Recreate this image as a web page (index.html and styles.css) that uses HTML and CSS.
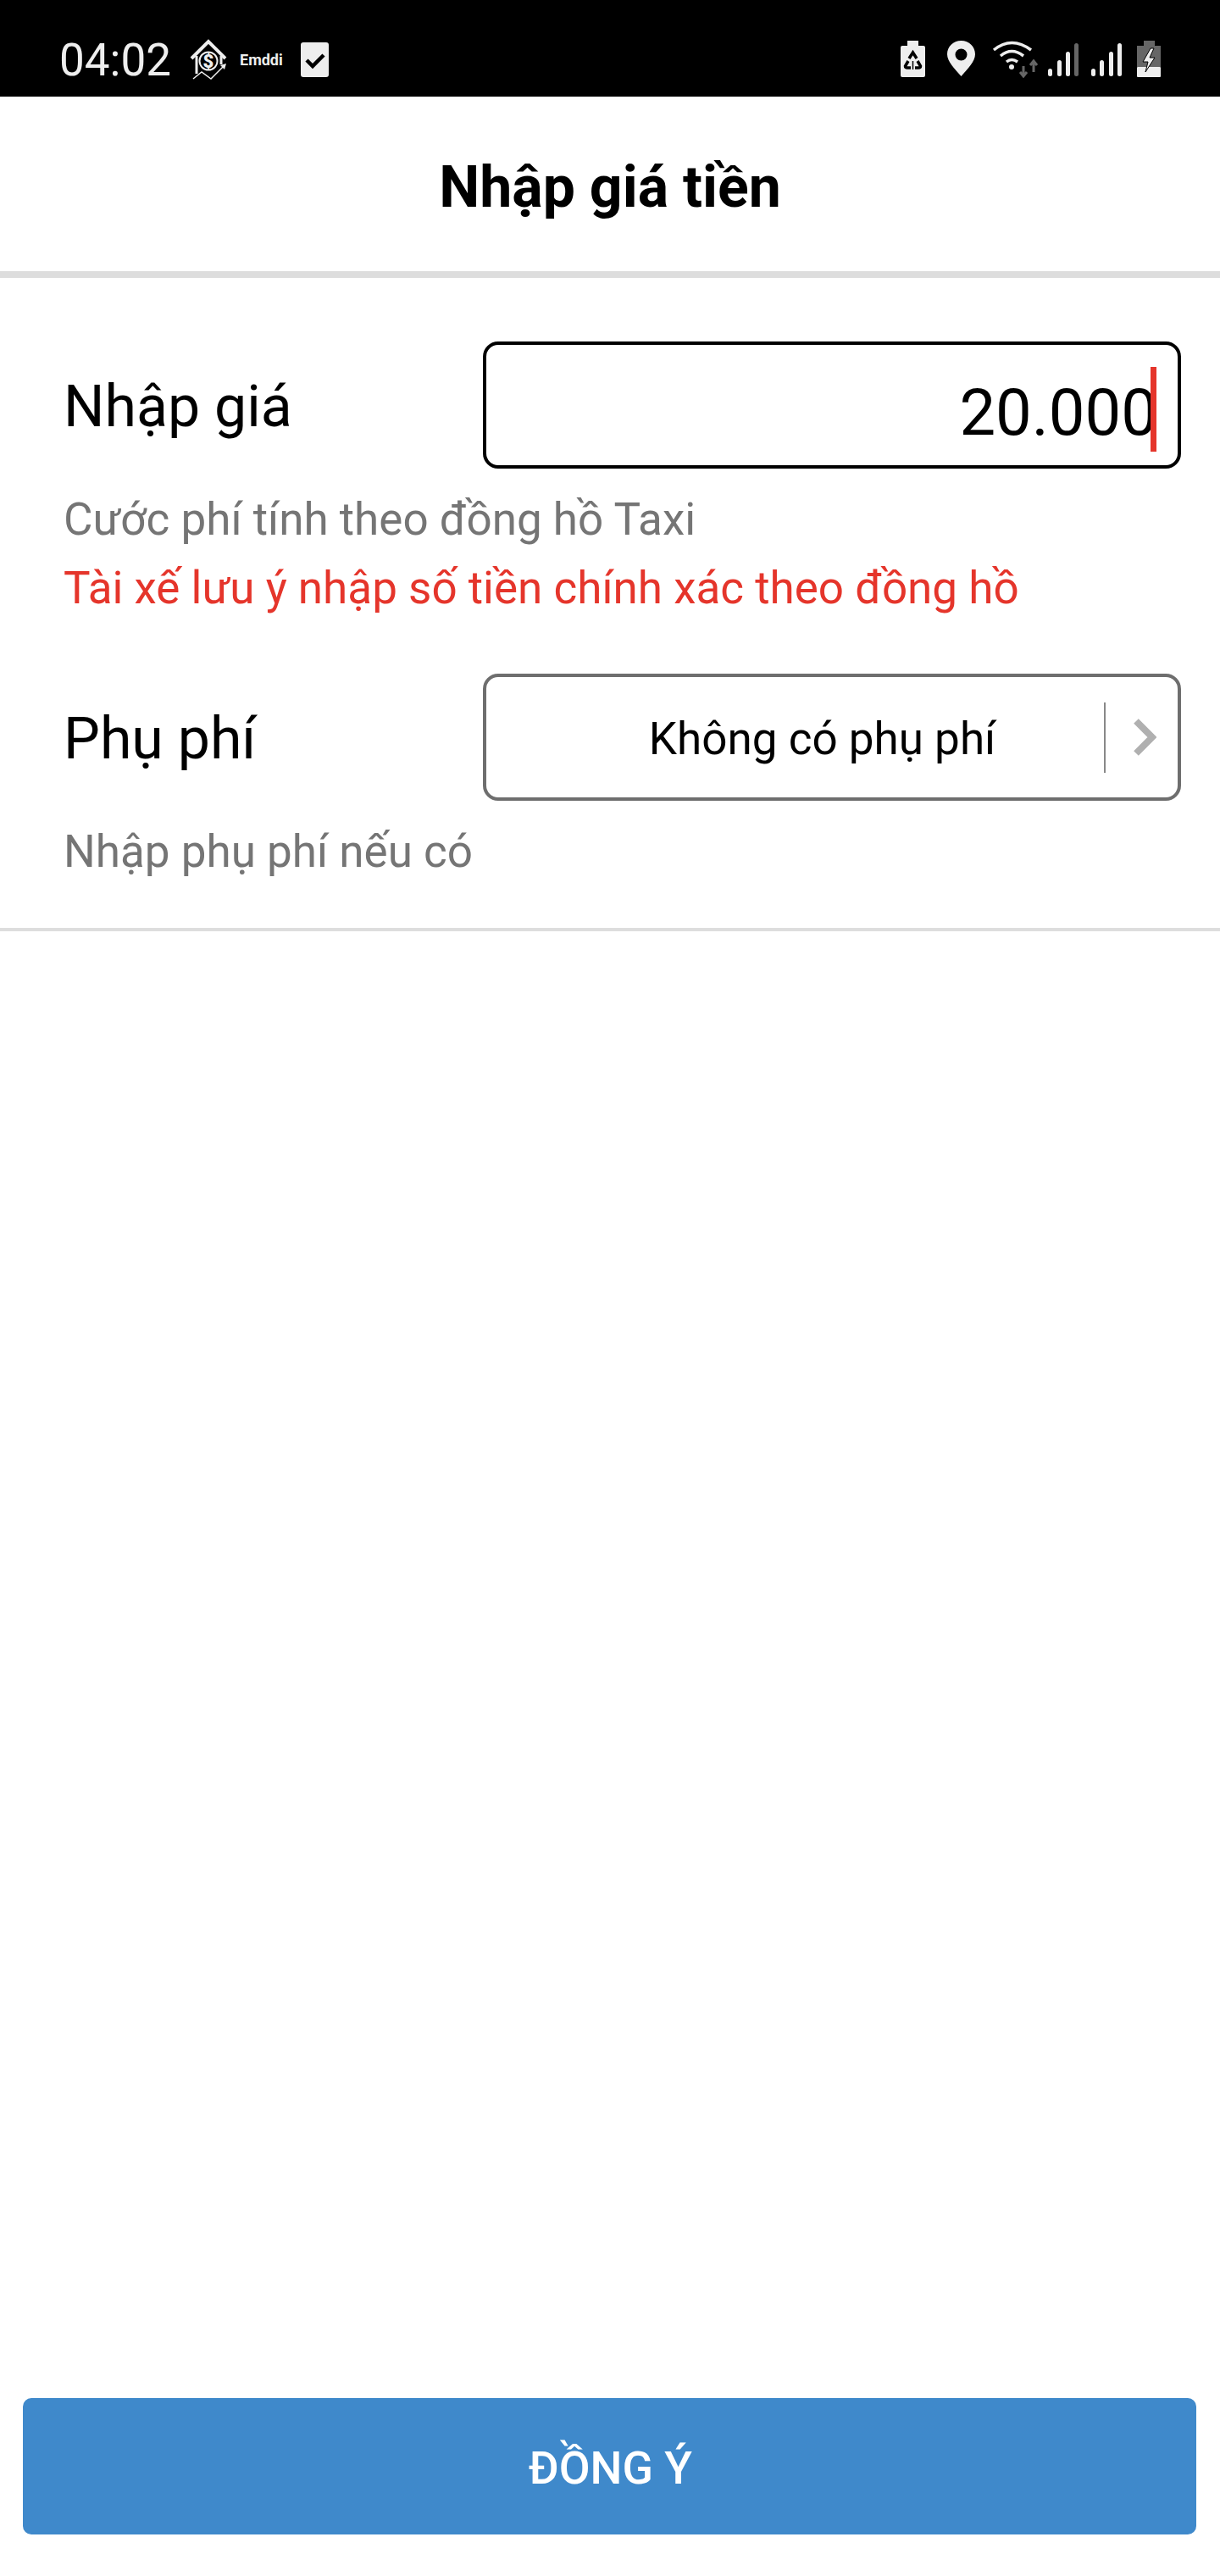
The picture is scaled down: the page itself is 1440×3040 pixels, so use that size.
FILE: index.html
```html
<!DOCTYPE html>
<html lang="vi">
<head>
  <meta charset="UTF-8">
  <title>Nhập giá tiền</title>
  <link rel="stylesheet" href="styles.css">
</head>
<body>
  <div class="screen">
    <div class="status-bar">
      <div class="status-left">
        <span class="time">04:02</span>
        <svg class="ic-house" viewBox="0 0 44 48" width="44" height="48">
          <path d="M2 23 L22 3 L42 23" fill="none" stroke="#eee" stroke-width="4"/>
          <path d="M8 20 V41 M37 20 V30" fill="none" stroke="#eee" stroke-width="3"/>
          <circle cx="22" cy="26" r="10.5" fill="none" stroke="#eee" stroke-width="2"/>
          <text x="22" y="33.5" class="dollar" text-anchor="middle">$</text>
          <path d="M4 47 L14 39 L25 47 L40 32" fill="none" stroke="#eee" stroke-width="1.5"/>
          <path d="M43 29 L36 31 L41 36 Z" fill="#eee"/>
        </svg>
        <span class="app-name">Emddi</span>
        <svg class="ic-check" viewBox="0 0 33 41" width="33" height="41">
          <rect width="33" height="41" rx="3" fill="#eee"/>
          <path d="M7 21 L14 28 L27 15" fill="none" stroke="#000" stroke-width="4.5"/>
        </svg>
      </div>
      <div class="status-right">
        <svg class="ic-saver" viewBox="0 0 29 43" width="29" height="43">
          <path d="M8 0 H21 V6 H27 Q29 6 29 8 V41 Q29 43 27 43 H2 Q0 43 0 41 V8 Q0 6 2 6 H8 Z" fill="#eee"/>
          <path d="M10 21 L14.5 14 L19 21 M9 24 L5.5 30 Q5.5 32 8 32 L12 32 M20 24 L23.5 30 Q23.5 32 21 32 L17 32" fill="none" stroke="#000" stroke-width="3.5"/>
          <path d="M14.5 24 V34" fill="none" stroke="#000" stroke-width="1.5"/>
        </svg>
        <svg class="ic-pin" viewBox="0 0 33 42" width="33" height="42">
          <path fill-rule="evenodd" d="M16.5 0 C26 0 33 7 33 16 C33 25 24 33 16.5 42 C9 33 0 25 0 16 C0 7 7 0 16.5 0 Z M16.5 9.5 A7 7 0 1 0 16.5 23.5 A7 7 0 1 0 16.5 9.5 Z" fill="#eee"/>
        </svg>
        <svg class="ic-wifi" viewBox="0 0 56 44" width="56" height="44">
          <path d="M2 11 Q23 -6 46 11" fill="none" stroke="#eee" stroke-width="3.5"/>
          <path d="M10 18 Q23 7 37 18" fill="none" stroke="#eee" stroke-width="3.5"/>
          <path d="M17 25 Q23 20 30 25" fill="none" stroke="#eee" stroke-width="3.5"/>
          <circle cx="23" cy="31" r="3" fill="#eee"/>
          <path d="M37 30 V42 M33 37 L37 42 L41 37" fill="none" stroke="#666" stroke-width="3"/>
          <path d="M49 37 V24 M45 29 L49 24 L53 29" fill="none" stroke="#666" stroke-width="3"/>
        </svg>
        <div class="signal">
          <span class="bar h1"></span><span class="bar h2"></span><span class="bar h3"></span><span class="bar h4 dim"></span>
        </div>
        <div class="signal">
          <span class="bar h1"></span><span class="bar h2"></span><span class="bar h3"></span><span class="bar h4"></span>
        </div>
        <svg class="ic-battery" viewBox="0 0 28 43" width="28" height="43">
          <path d="M8 0 H21 V6 H28 V31 H0 V6 H8 Z" fill="#666"/>
          <rect y="31" width="28" height="12" rx="1" fill="#eee"/>
          <path d="M16 9 L7 25 L13 25 L10 37 L21 20 L15 20 L20 9 Z" fill="#eee" stroke="#000" stroke-width="1"/>
        </svg>
      </div>
    </div>

    <div class="header">
      <h1 class="title">Nhập giá tiền</h1>
    </div>

    <div class="form">
      <div class="row">
        <div class="row-label">Nhập giá</div>
        <div class="box box-active">
          <span class="amount">20.000</span>
          <span class="caret"></span>
        </div>
      </div>
      <div class="hint">Cước phí tính theo đồng hồ Taxi</div>
      <div class="hint hint-red">Tài xế lưu ý nhập số tiền chính xác theo đồng hồ</div>

      <div class="row row-second">
        <div class="row-label">Phụ phí</div>
        <div class="box box-select">
          <span class="select-text">Không có phụ phí</span>
          <span class="select-sep"></span>
          <svg class="chevron" viewBox="0 0 28 44" width="28" height="44">
            <path d="M4 3 L23 22 L4 41" fill="none" stroke="#b0b0b0" stroke-width="8"/>
          </svg>
        </div>
      </div>
      <div class="hint">Nhập phụ phí nếu có</div>
    </div>

    <div class="footer">
      <button class="btn-ok">ĐỒNG Ý</button>
    </div>
  </div>
</body>
</html>
```

FILE: styles.css
```css
* {
  box-sizing: border-box;
}

body {
  margin: 0;
  font-family: Roboto, "Noto Sans", sans-serif;
  background: #fff;
}

.screen {
  width: 1440px;
  height: 3040px;
  display: flex;
  flex-direction: column;
}

/* thanh trang thai */
.status-bar {
  height: 114px;
  background: #000;
  color: #eee;
  display: flex;
  justify-content: space-between;
  align-items: flex-start;
  padding: 46px 70px 0 70px;
}

.status-left,
.status-right {
  display: flex;
  align-items: flex-start;
}

.time {
  font-size: 53px;
  line-height: 50px;
  width: 154px;
}

.ic-check {
  margin: 4px 0 0 22px;
}

.app-name {
  font-size: 18px;
  font-weight: 700;
  line-height: 18px;
  width: 50px;
  margin: 16px 0 0 15px;
}

.dollar {
  font-size: 22px;
  font-weight: 900;
  fill: #eee;
  font-family: Roboto, sans-serif;
}

.status-right {
  padding-top: 2px;
}

.ic-pin {
  margin-left: 26px;
}

.ic-wifi {
  margin-left: 20px;
}

.signal {
  display: flex;
  align-items: flex-end;
  gap: 5.3px;
  height: 42px;
  margin-left: 10px;
}

.signal + .signal {
  margin-left: 15px;
}

.bar {
  width: 5px;
  border-radius: 3px;
  background: #eee;
}

.bar.dim {
  background: #666;
}

.h1 { height: 9px; }
.h2 { height: 19px; }
.h3 { height: 29px; }
.h4 { height: 39px; }

.ic-battery {
  margin-left: 18px;
}

/* tieu de */
.header {
  height: 214px;
  padding-top: 8px;
  border-bottom: 8px solid #ddd;
  display: flex;
  align-items: center;
  justify-content: center;
}

.title {
  margin: 0;
  font-size: 68px;
  font-weight: 700;
  color: #000;
}

/* form nhap */
.form {
  height: 771px;
  padding: 75px 46px 0 75px;
  border-bottom: 4px solid #ddd;
}

.row {
  display: flex;
  align-items: center;
}

.row-second {
  margin-top: 60px;
}

.row-label {
  width: 495px;
  padding-top: 4px;
  font-size: 68px;
  color: #000;
}

.box {
  width: 824px;
  height: 150px;
  border-radius: 18px;
  display: flex;
  align-items: center;
}

.box-active {
  border: 4px solid #000;
  justify-content: flex-end;
  padding-right: 25px;
}

.amount {
  padding-top: 18px;
  font-size: 76px;
  color: #000;
}

.caret {
  width: 7px;
  height: 100px;
  margin: 10px 0 0 -8px;
  background: #e5352b;
}

.box-select {
  border: 4px solid #6e6e6e;
  padding-right: 25px;
}

.select-text {
  width: 730px;
  padding: 4px 0 0 64px;
  text-align: center;
  font-size: 53px;
  color: #000;
  line-height: 60px;
}

.select-sep {
  width: 2px;
  height: 83px;
  background: #888;
}

.chevron {
  margin-left: 32px;
}

.hint {
  font-size: 53px;
  line-height: 81px;
  color: #757575;
}

.row + .hint {
  margin-top: 20px;
}

.hint-red {
  color: #e5352b;
}

/* nut dong y */
.footer {
  margin-top: auto;
  padding: 0 28px 49px 27px;
}

.btn-ok {
  display: block;
  width: 100%;
  height: 161px;
  padding: 4px 0 0 2px;
  border: 0;
  border-radius: 10px;
  background: #3f89cb;
  color: #fff;
  font-family: Roboto, sans-serif;
  font-size: 53.5px;
  font-weight: 500;
}
```
